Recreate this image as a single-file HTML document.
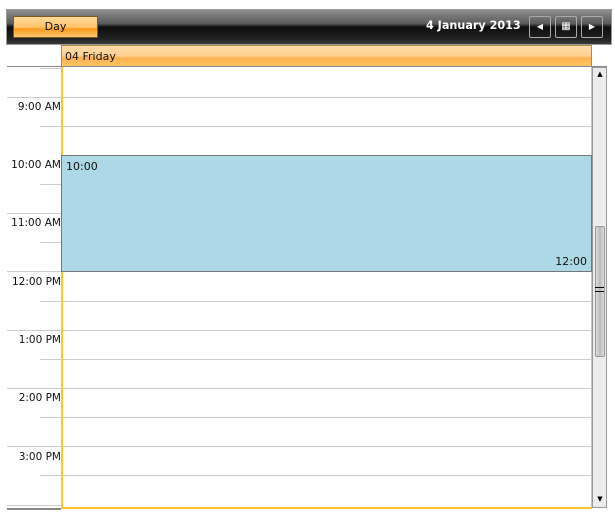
<!DOCTYPE html><html><head><style>
body{margin:0;width:615px;height:516px;background:#fff;font-family:"DejaVu Sans","Liberation Sans",sans-serif;position:relative;overflow:hidden}
div{position:absolute;box-sizing:border-box}
.tb{left:6px;top:9px;width:606px;height:36px;border:1px solid #999;background:linear-gradient(#8d8d8d,#5a5a5a 40%,#0e0e0e 50%,#222 85%,#3a3a3a)}
.day{left:13px;top:16px;width:85px;height:22px;border:1px solid #7a5a20;background:linear-gradient(#ffd898,#ffc66e 50%,#f99a1c 60%,#ffc870);font-size:11px;text-align:center;line-height:20px;color:#111}
.date{left:426px;top:19px;color:#fff;font-weight:bold;font-size:11.2px}
.nb{top:16px;width:22px;height:22px;border:1px solid #aaa;border-radius:2px;color:#fff;font-size:8px;text-align:center;line-height:20px}
.hdr{left:61px;top:45px;width:531px;height:22px;border:1px solid #b0884a;background:linear-gradient(#ffdca8,#ffd090 50%,#ffb050 60%,#ffc860);font-size:11px;line-height:21px;padding-left:3px;color:#111}
.l{height:1px;background:#ccc}
.t{left:0;width:61px;text-align:right;font-size:10.5px;color:#111}
</style></head><body>
<div class="tb"></div>
<div class="day">Day</div>
<div class="date">4 January 2013</div>
<div class="nb" style="left:529px">&#9664;</div>
<div class="nb" style="left:555px;font-size:10px">&#9638;</div>
<div class="nb" style="left:581px">&#9654;</div>
<div class="hdr">04 Friday</div>
<div style="left:7px;top:66px;width:600px;height:1px;background:#888"></div>
<div class="l" style="left:40px;top:68px;width:21px"></div>
<div class="l" style="left:7px;top:97px;width:584px"></div><div class="t" style="top:101px">9:00 AM</div>
<div class="l" style="left:40px;top:126px;width:551px"></div>
<div class="t" style="top:159px">10:00 AM</div>
<div class="l" style="left:40px;top:184px;width:21px"></div>
<div class="l" style="left:7px;top:213px;width:54px"></div><div class="t" style="top:217px">11:00 AM</div>
<div class="l" style="left:40px;top:242px;width:21px"></div>
<div class="l" style="left:7px;top:271px;width:584px"></div><div class="t" style="top:276px">12:00 PM</div>
<div class="l" style="left:40px;top:301px;width:551px"></div>
<div class="l" style="left:7px;top:330px;width:584px"></div><div class="t" style="top:334px">1:00 PM</div>
<div class="l" style="left:40px;top:359px;width:551px"></div>
<div class="l" style="left:7px;top:388px;width:584px"></div><div class="t" style="top:392px">2:00 PM</div>
<div class="l" style="left:40px;top:417px;width:551px"></div>
<div class="l" style="left:7px;top:446px;width:584px"></div><div class="t" style="top:451px">3:00 PM</div>
<div class="l" style="left:40px;top:475px;width:551px"></div>
<div class="l" style="left:7px;top:505px;width:54px"></div>
<div style="left:7px;top:508px;width:54px;height:2px;background:#888"></div>
<div style="left:61px;top:67px;width:531px;height:442px;border:2px solid #fbc82a;border-top:none;border-right-width:1px"></div>
<div style="left:61px;top:155px;width:531px;height:117px;background:#add8e6;border:1px solid #777;font-size:11px;color:#111"><span style="position:absolute;left:4px;top:4px">10:00</span><span style="position:absolute;right:4px;bottom:3px">12:00</span></div>
<div style="left:592px;top:67px;width:15px;height:441px;background:#ececec;border:1px solid #999"></div>
<div style="left:595px;top:226px;width:10px;height:131px;background:linear-gradient(90deg,#ddd,#bbb,#ddd);border:1px solid #999;border-radius:2px"></div>
<div style="left:595px;top:287px;width:9px;height:5px;border-top:1px solid #000;border-bottom:1px solid #000"></div>
<div style="left:594px;top:70px;width:12px;font-size:7px;text-align:center">&#9650;</div>
<div style="left:594px;top:495px;width:12px;font-size:7px;text-align:center">&#9660;</div>
</body></html>
